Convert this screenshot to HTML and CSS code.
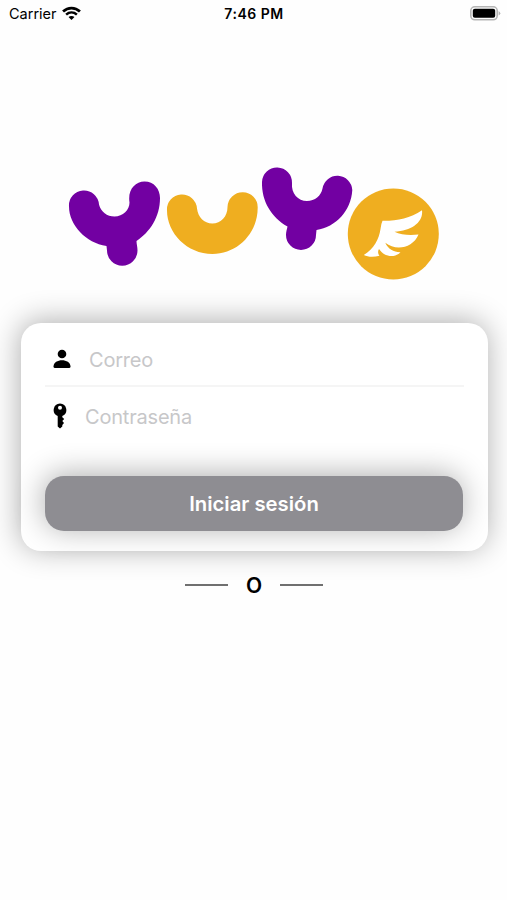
FILE: index.html
```
<!DOCTYPE html>
<html lang="es">
<head>
    <meta charset="UTF-8">
    <meta name="viewport" content="width=device-width, initial-scale=1.0">
    <title>Yuyo - Iniciar sesión</title>
    <link rel="stylesheet" href="styles.css">
</head>
<body>
    <!-- Status bar -->
    <div class="status-bar">
        <div class="carrier">
            <span>Carrier</span>
            <svg class="wifi" viewBox="0 0 18 14" width="19" height="15">
                <path d="M1 5.100 C5.600 .7 12.400 .7 17 5.100" fill="none" stroke="#000" stroke-width="2.600"/>
                <path d="M3.900 8.100 C6.900 5.400 11.100 5.400 14.100 8.100" fill="none" stroke="#000" stroke-width="2.400"/>
                <path d="M9 13.200 L6.200 10.400 C7.800 9 10.200 9 11.800 10.400 Z"/>
            </svg>
        </div>
        <div class="time">7:46 PM</div>
        <div class="battery">
            <svg viewBox="0 0 31 15" width="31" height="15">
                <rect x=".8" y=".8" width="26.400" height="13" rx="4" fill="#fff" stroke="#b5b5b5" stroke-width="1.600"/>
                <rect x="2.800" y="2.800" width="22.400" height="9" rx="2" fill="#000"/>
                <path d="M28.600 5 Q32 7.300 28.600 9.600 Z" fill="#b5b5b5"/>
            </svg>
        </div>
    </div>

    <!-- Logo -->
    <svg class="logo" viewBox="60 160 390 125" width="390" height="125">
        <path class="purple" d="M69 206.500 A15 15 0 0 1 99 204.500 C101 212 107 216.500 114.500 216.500 C123 216.500 129.500 210 129.500 202.500 C127.500 190 135 181.500 144.500 181.500 C154 181.500 160 189 160 198 C160 217 150 232 136.500 241 C136.500 244 137.500 247 137.500 250.500 A15 15 0 0 1 107 250.500 L106.500 246 C86 243 69 225 69 206.500 Z"/>
        <path class="yellow" d="M167 210.500 A15 15 0 0 1 197 208.500 C198 217 204 223.500 212.300 223.500 C221 223.500 227.500 216.500 227.500 207 A15 15 0 0 1 257.700 207.500 C257.700 234 237 254 212.500 254 C187 254 167 233 167 210.500 Z"/>
        <path class="purple" d="M262 182 A15 15 0 0 1 292 183 C291 193.500 298 201 307 201 C315 201 321 196 322.500 188.500 A15 15 0 0 1 352.300 190 C351 211 336 227 316.500 230 L316 235 A15 15 0 0 1 286 235 C286 232 287 229 287.500 226.500 C271 217 261.500 201 262 182 Z"/>
        <circle class="yellow" cx="393.300" cy="234" r="45.500"/>
        <path class="wing" d="M382.500 220.800 C397 221 410 218.500 422 210.300 C423.500 222 412 231 394.500 231.800 C401 235 410 235.500 418.500 234.500 C413 248 396 251.500 385.300 242.800 C388 249 394 252.500 400.500 252.300 C396 257.500 385 258 379 249 C377.500 251.500 378 254 379.500 255.800 C374 257.200 368 257.300 363.800 255 C374 249 379 239 380.500 229 Q381 224 382.500 220.800 Z"/>
    </svg>

    <!-- Login form -->
    <form class="card">
        <div class="field">
            <svg class="user-icon" viewBox="0 0 18 20" width="18" height="20">
                <circle cx="9" cy="5" r="4.300"/>
                <path d="M.5 17.500 C.5 9 17.500 9 17.500 17.500 Q17.500 19 16 19 H2 Q.5 19 .5 17.500 Z"/>
            </svg>
            <input type="text" placeholder="Correo">
        </div>
        <div class="field password">
            <svg class="key-icon" viewBox="0 0 14 26" width="14" height="26">
                <path fill-rule="evenodd" d="M7 .5 A6.500 6.500 0 0 1 9.300 13 V14.300 L11.200 16 L9.300 18 L11 20 L9.300 22 V23.600 L7 25.600 L4.700 23.600 V13 A6.500 6.500 0 0 1 7 .5 Z M7 2.800 A2 2 0 1 0 7 6.800 A2 2 0 1 0 7 2.800 Z"/>
            </svg>
            <input type="password" placeholder="Contraseña">
        </div>
        <button type="button" class="login-btn">Iniciar sesión</button>
    </form>

    <div class="separator">
        <span class="line"></span>
        <span class="or">O</span>
        <span class="line"></span>
    </div>
</body>
</html>
```
FILE: styles.css
```
* {
    box-sizing: border-box;
}
body {
    font-family: Inter, "Liberation Sans", sans-serif;
    margin: 0;
    height: 900px;
    background-color: #fefefe;
    overflow: hidden;
}
.status-bar {
    display: grid;
    grid-template-columns: 1fr auto 1fr;
    align-items: center;
    height: 27px;
    padding: 0 6px 0 9px;
    font-size: 14.5px;
}
.carrier {
    display: flex;
    align-items: center;
    gap: 5px;
}
.time {
    margin-right: 2px;
    font-size: 14px;
    font-weight: 600;
    letter-spacing: 0.5px;
}
.battery {
    display: flex;
    justify-content: flex-end;
}
.logo {
    display: block;
    margin: 133px 0 0 60px;
}
.purple {
    fill: #7200a2;
}
.yellow {
    fill: #efae20;
}
.wing {
    fill: white;
}
.card {
    width: 467px;
    height: 228px;
    margin: 38px 0 0 21px;
    padding: 10px 24px 0;
    border-radius: 20px;
    background-color: white;
    box-shadow: -1px -2px 30px rgba(0, 0, 0, 0.32);
}
.field {
    display: flex;
    align-items: center;
    height: 54px;
    padding-left: 8px;
    border-bottom: 2px solid #f5f5f5;
}
.field input {
    flex: 1;
    min-width: 0;
    padding: 2px 0 0;
    border: none;
    outline: none;
    background: none;
    font-family: inherit;
    font-size: 20px;
    letter-spacing: -0.2px;
}
.field input::placeholder {
    color: #c7c7c9;
}
.user-icon {
    margin-right: 18px;
}
.key-icon {
    margin-right: 18px;
}
.password {
    height: 58px;
    border-bottom: none;
}
.login-btn {
    display: block;
    width: 418px;
    height: 55px;
    margin-top: 31px;
    border: none;
    border-radius: 19px;
    background-color: #8e8d92;
    color: white;
    font-family: inherit;
    font-size: 20.3px;
    font-weight: 600;
    box-shadow: -1px -2px 30px rgba(0, 0, 0, 0.32);
}
.separator {
    display: flex;
    justify-content: center;
    align-items: center;
    height: 30px;
    margin: 19px 0 0 1px;
    gap: 18px;
}
.line {
    width: 43px;
    height: 2px;
    background-color: #707070;
}
.or {
    font-size: 21px;
    font-weight: 600;
}
```
